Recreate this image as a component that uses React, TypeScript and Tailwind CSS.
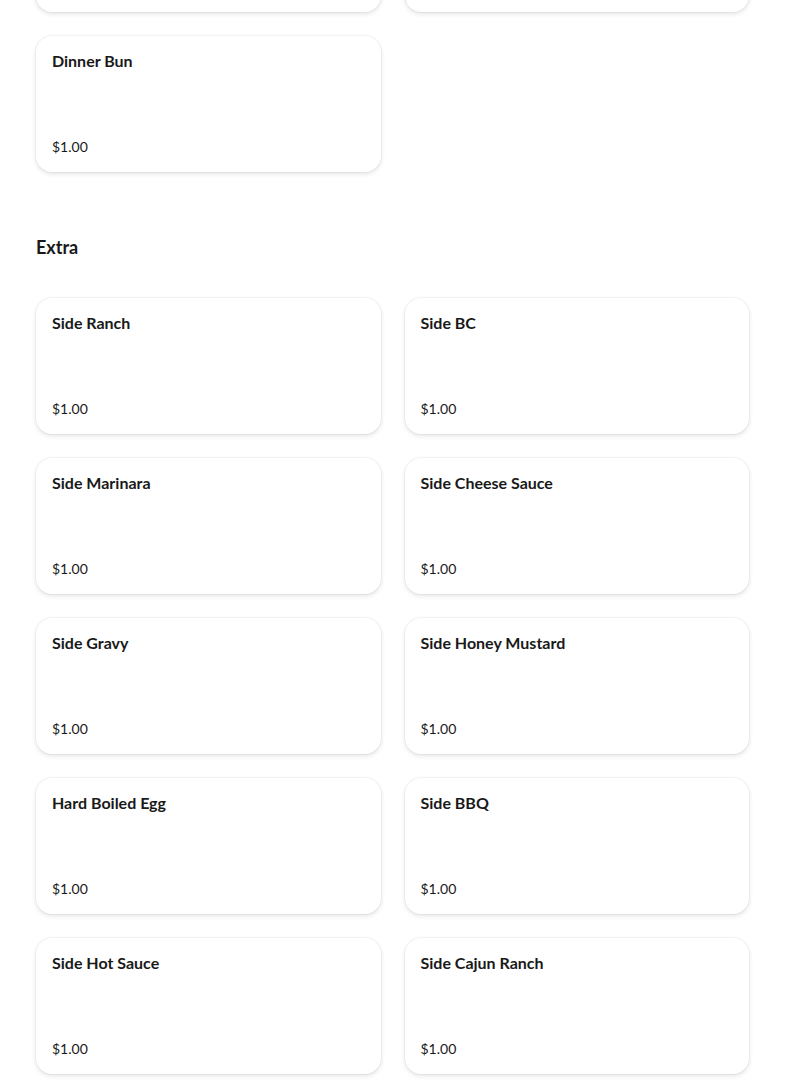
import React from 'react';

type Item = { name: string; price: string };

const bread: Item[] = [{ name: 'Dinner Bun', price: '$1.00' }];

const extras: Item[] = [
  { name: 'Side Ranch', price: '$1.00' },
  { name: 'Side BC', price: '$1.00' },
  { name: 'Side Marinara', price: '$1.00' },
  { name: 'Side Cheese Sauce', price: '$1.00' },
  { name: 'Side Gravy', price: '$1.00' },
  { name: 'Side Honey Mustard', price: '$1.00' },
  { name: 'Hard Boiled Egg', price: '$1.00' },
  { name: 'Side BBQ', price: '$1.00' },
  { name: 'Side Hot Sauce', price: '$1.00' },
  { name: 'Side Cajun Ranch', price: '$1.00' },
];

const cardClass =
  'bg-white rounded-2xl shadow-[0_0_0_1px_rgba(0,0,0,0.035),0_2px_5px_rgba(0,0,0,0.11)]';

const ItemCard: React.FC<{ item: Item }> = ({ item }) => (
  <div className={`h-[136px] px-4 pt-[15px] pb-[15px] flex flex-col justify-between ${cardClass}`}>
    <h4 className="text-[16px] leading-5 font-bold text-[#191919]">{item.name}</h4>
    <p className="text-[14px] leading-5 text-[#191919]">{item.price}</p>
  </div>
);

export default function App() {
  return (
    <div className="min-h-screen bg-white px-9 pb-8" style={{ fontFamily: 'Lato, "Open Sans", sans-serif' }}>
      {/* previous section, scrolled mostly out of view */}
      <div className="grid grid-cols-2 gap-6 -mt-[124px]">
        <div className={`h-[136px] ${cardClass}`} />
        <div className={`h-[136px] ${cardClass}`} />
        {bread.map(item => (
          <ItemCard key={item.name} item={item} />
        ))}
      </div>

      <section className="mt-[63px]">
        <h2 className="text-[18px] leading-6 font-bold text-[#191919] mb-[39px]">Extra</h2>
        <div className="grid grid-cols-2 gap-6">
          {extras.map(item => (
            <ItemCard key={item.name} item={item} />
          ))}
        </div>
      </section>
    </div>
  );
}
